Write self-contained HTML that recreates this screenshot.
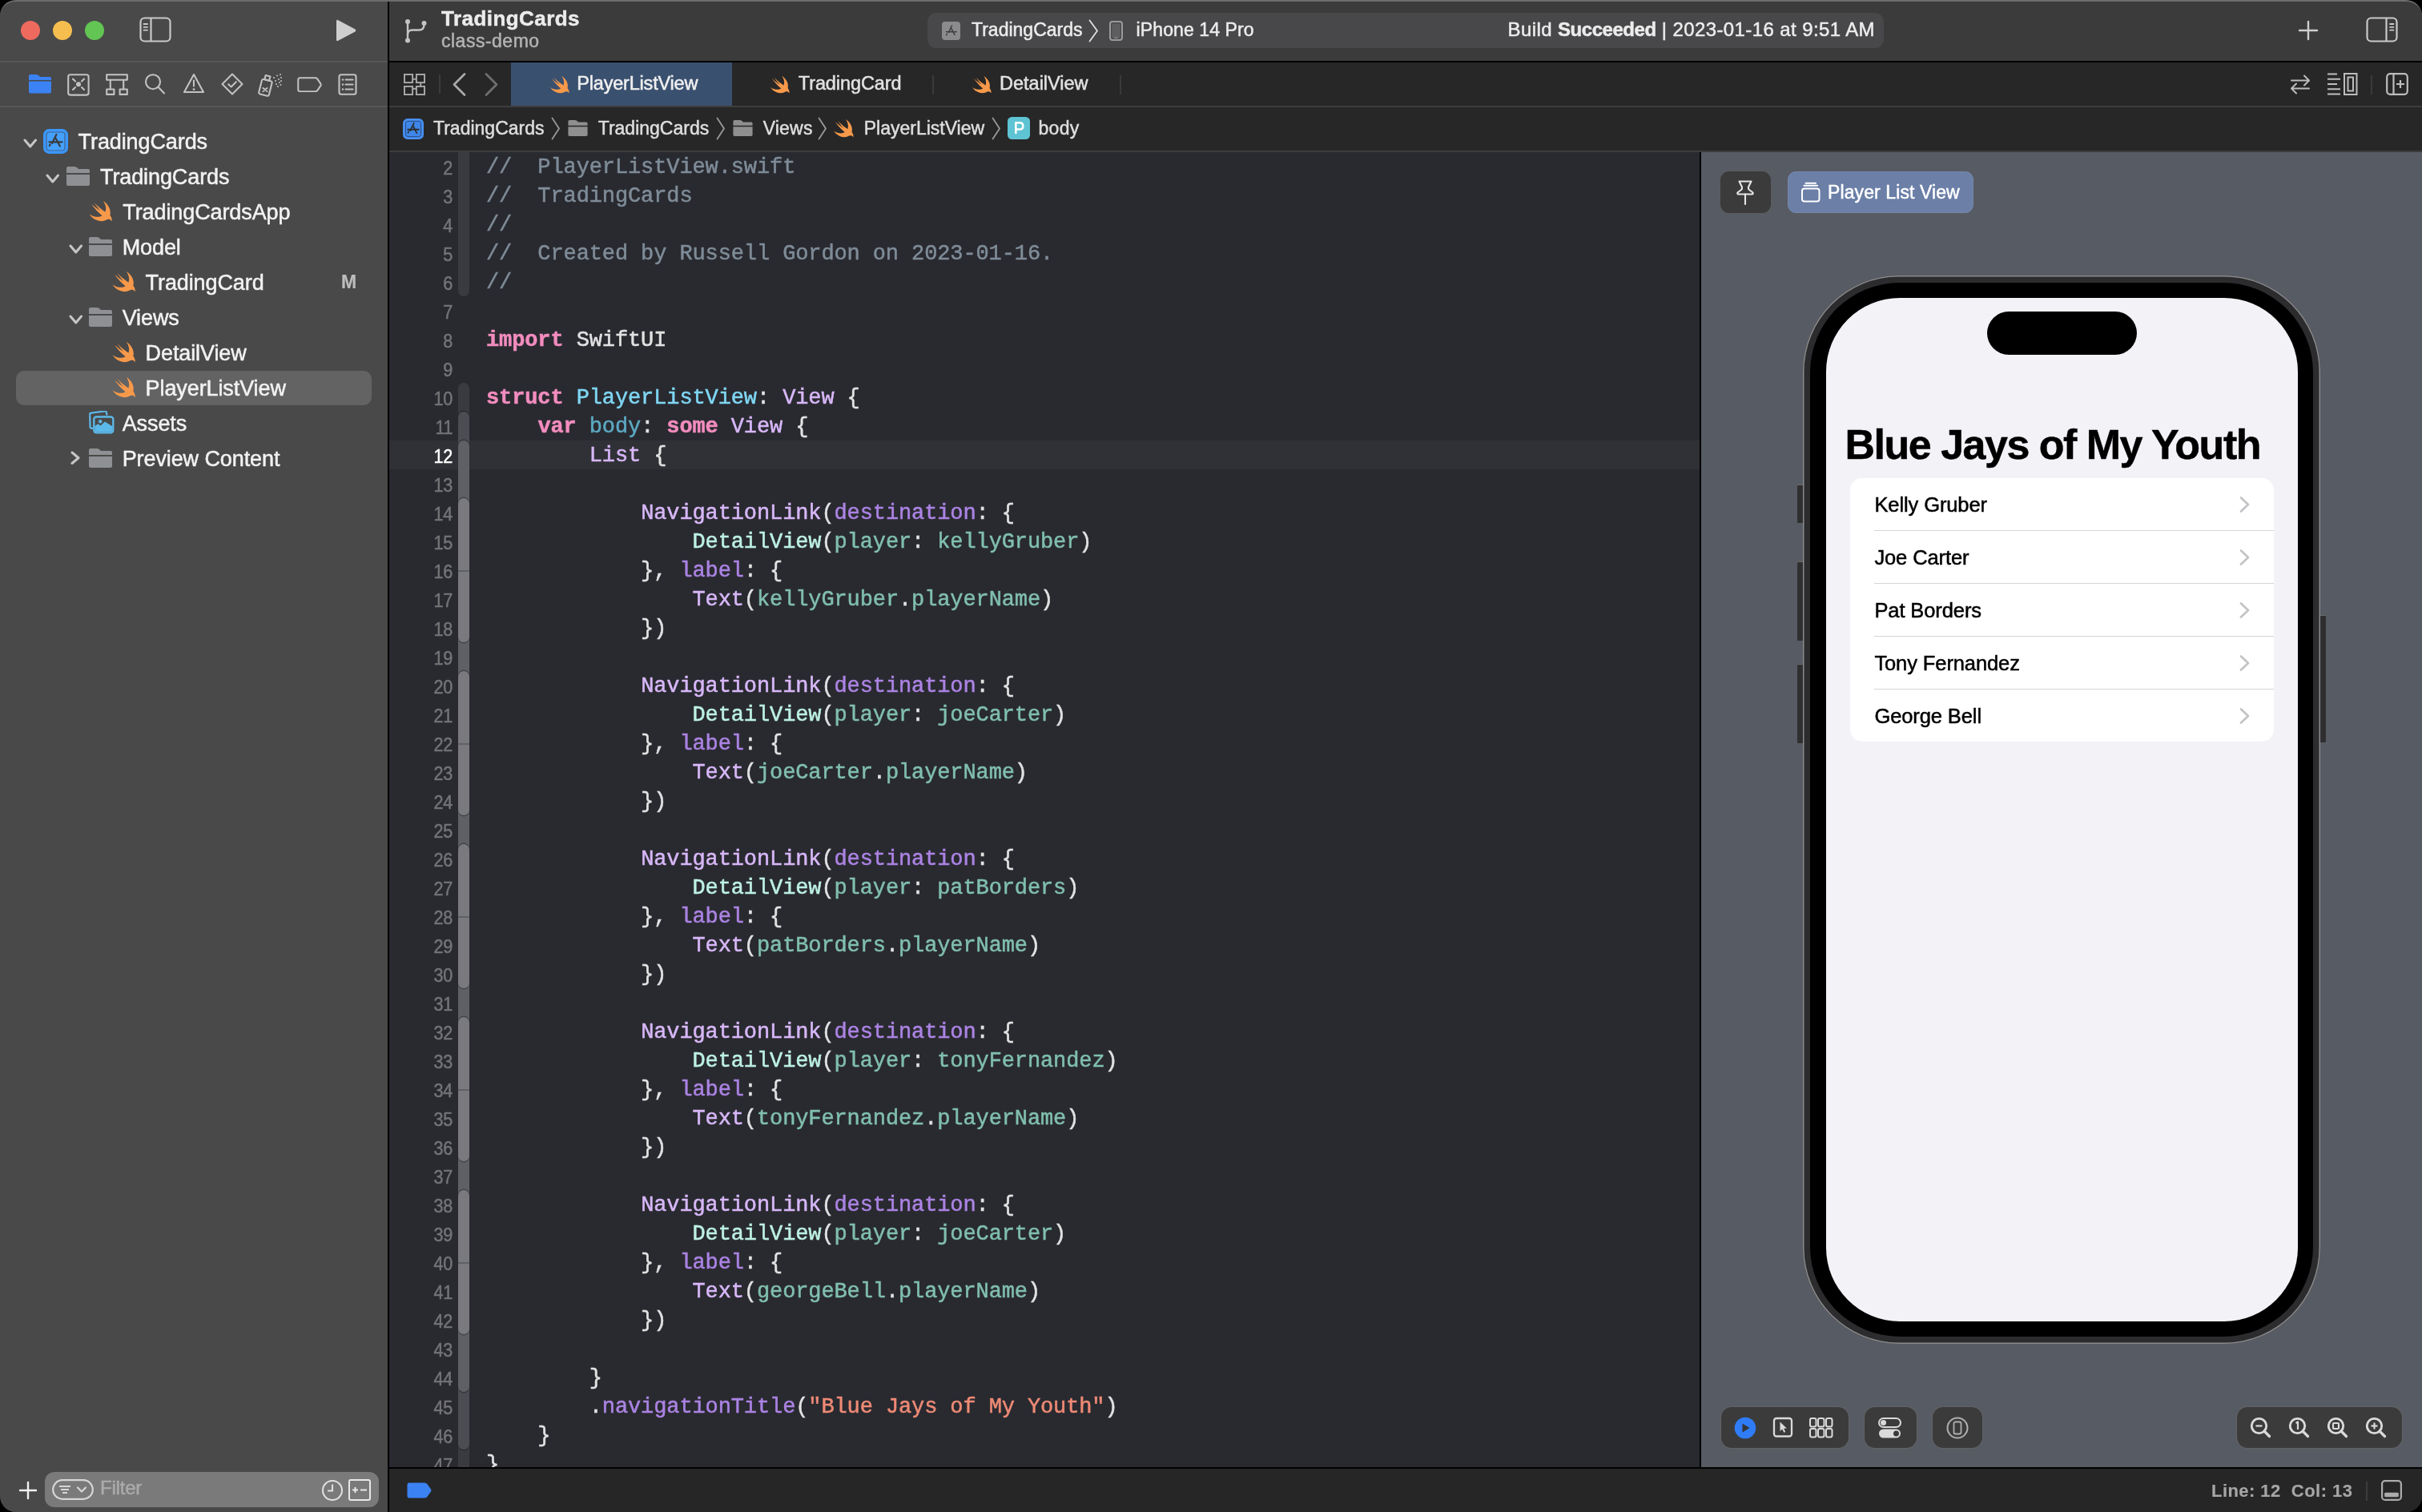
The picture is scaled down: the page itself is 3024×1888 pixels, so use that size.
<!DOCTYPE html>
<html><head><meta charset="utf-8"><style>
*{box-sizing:border-box;margin:0;padding:0}
html,body{width:3024px;height:1888px;overflow:hidden;background:#000}
body{font-family:"Liberation Sans",sans-serif;position:relative}
.a{position:absolute}
svg.a{display:block}
.t{position:absolute;white-space:pre;-webkit-text-stroke-width:0.5px}
#win{position:absolute;left:0;top:0;width:3024px;height:1888px;border-radius:20px;overflow:hidden;background:#292a30;will-change:transform}
#edge{position:absolute;left:0;top:0;width:3024px;height:1888px;border-radius:20px;border-top:2px solid #6c6c6c;pointer-events:none}
.ln{position:absolute;right:1557px;font-size:24px;line-height:24px;letter-spacing:-0.3px;white-space:pre;-webkit-text-stroke-width:0.5px;transform:scaleX(0.9);transform-origin:right center}
.cl{position:absolute;left:121px;font-family:"Liberation Mono",monospace;font-size:27px;line-height:27px;letter-spacing:-0.11px;white-space:pre;color:#e2e2e3;-webkit-text-stroke-width:0.5px}
</style></head><body>
<div id="win">
<div class="a" style="left:0px;top:0px;width:484px;height:1888px;background:#494949;"></div>
<div class="a" style="left:0px;top:76px;width:484px;height:2px;background:#575757;"></div>
<div class="a" style="left:0px;top:132px;width:484px;height:2px;background:#575757;"></div>
<div class="a" style="left:26px;top:26px;width:24px;height:24px;border-radius:50%;background:#ee6a5f"></div>
<div class="a" style="left:66px;top:26px;width:24px;height:24px;border-radius:50%;background:#f5be4f"></div>
<div class="a" style="left:106px;top:26px;width:24px;height:24px;border-radius:50%;background:#62c554"></div>
<svg class="a" style="left:174px;top:21px;" width="40" height="32" viewBox="0 0 40 32"><rect x="1.5" y="1.5" width="37" height="29" rx="5" fill="none" stroke="#c9c9c9" stroke-width="2.2"/><line x1="14.5" y1="2" x2="14.5" y2="30" stroke="#c9c9c9" stroke-width="2.2"/><g stroke="#c9c9c9" stroke-width="1.8" stroke-linecap="round"><line x1="5.5" y1="9" x2="10" y2="9"/><line x1="5.5" y1="12.8" x2="10" y2="12.8"/><line x1="5.5" y1="16.6" x2="10" y2="16.6"/></g></svg>
<svg class="a" style="left:418px;top:23px;" width="28" height="30" viewBox="0 0 28 30"><path d="M2 3.5 Q2 1 4.3 2.2 L25.5 13.4 Q27.3 15 25.5 16.6 L4.3 27.8 Q2 29 2 26.5Z" fill="#cecece"/></svg>
<svg class="a" style="left:36px;top:93px;" width="28" height="24" viewBox="0 0 28 24"><path fill="#3b82f4" d="M2 0 H9 Q11 0 12.5 1.5 L14 3 H26 Q28 3 28 5 V7 H0 V2 Q0 0 2 0Z"/><path fill="#3b82f4" d="M0 8.5 H28 V21.5 Q28 23.5 26 23.5 H2 Q0 23.5 0 21.5Z"/></svg>
<svg class="a" style="left:84px;top:92px;" width="28" height="28" viewBox="0 0 28 28"><rect x="1.2" y="1.2" width="25.4" height="25.4" rx="2.5" fill="none" stroke="#c2c2c2" stroke-width="2.1" stroke-linecap="round" stroke-linejoin="round"/><circle cx="14" cy="13.3" r="3" fill="#c2c2c2"/><g fill="none" stroke="#c2c2c2" stroke-width="2.1" stroke-linecap="round" stroke-linejoin="round" stroke-width="1.8"><line x1="7" y1="6.5" x2="10" y2="9.5"/><line x1="21" y1="6.5" x2="18" y2="9.5"/><line x1="7" y1="20" x2="10" y2="17"/><line x1="21" y1="20" x2="18" y2="17"/></g></svg>
<svg class="a" style="left:132px;top:92px;" width="28" height="28" viewBox="0 0 28 28"><rect x="1.2" y="1.2" width="25.6" height="6.6" fill="none" stroke="#c2c2c2" stroke-width="2.1" stroke-linecap="round" stroke-linejoin="round" stroke-linecap="butt" stroke-linejoin="miter"/><line x1="5.8" y1="8" x2="5.8" y2="19.5" fill="none" stroke="#c2c2c2" stroke-width="2.1" stroke-linecap="round" stroke-linejoin="round"/><line x1="22.2" y1="8" x2="22.2" y2="19.5" fill="none" stroke="#c2c2c2" stroke-width="2.1" stroke-linecap="round" stroke-linejoin="round"/><rect x="1.2" y="19.5" width="9.2" height="6.4" fill="none" stroke="#c2c2c2" stroke-width="2.1" stroke-linecap="round" stroke-linejoin="round" stroke-linejoin="miter"/><rect x="17.6" y="19.5" width="9.2" height="6.4" fill="none" stroke="#c2c2c2" stroke-width="2.1" stroke-linecap="round" stroke-linejoin="round" stroke-linejoin="miter"/></svg>
<svg class="a" style="left:180px;top:91px;" width="28" height="28" viewBox="0 0 28 28"><circle cx="11" cy="11.2" r="9" fill="none" stroke="#c2c2c2" stroke-width="2.1" stroke-linecap="round" stroke-linejoin="round"/><line x1="17.6" y1="17.8" x2="25" y2="25.4" fill="none" stroke="#c2c2c2" stroke-width="2.1" stroke-linecap="round" stroke-linejoin="round" stroke-width="2.4"/></svg>
<svg class="a" style="left:228px;top:91px;" width="28" height="28" viewBox="0 0 28 28"><path d="M14 2 L26 24 H2 Z" fill="none" stroke="#c2c2c2" stroke-width="2.1" stroke-linecap="round" stroke-linejoin="round"/><path d="M14 9.5 L14 16.5" fill="none" stroke="#c2c2c2" stroke-width="2.1" stroke-linecap="round" stroke-linejoin="round" stroke-width="2.8"/><circle cx="14" cy="20.6" r="1.4" fill="#c2c2c2"/></svg>
<svg class="a" style="left:276px;top:91px;" width="28" height="28" viewBox="0 0 28 28"><path d="M14 1.5 L26.5 14 L14 26.5 L1.5 14 Z" fill="none" stroke="#c2c2c2" stroke-width="2.1" stroke-linecap="round" stroke-linejoin="round"/><path d="M9.2 14.2 L12.7 17.4 L18.8 11.2" fill="none" stroke="#c2c2c2" stroke-width="2.1" stroke-linecap="round" stroke-linejoin="round" stroke-width="2.3"/></svg>
<svg class="a" style="left:322px;top:91px;" width="34" height="30" viewBox="0 0 34 30"><g transform="rotate(14 10 18)"><rect x="3" y="9" width="13" height="19" rx="2" fill="none" stroke="#c2c2c2" stroke-width="2.1" stroke-linecap="round" stroke-linejoin="round"/><rect x="6" y="3.5" width="6" height="5.5" fill="none" stroke="#c2c2c2" stroke-width="2.1" stroke-linecap="round" stroke-linejoin="round"/></g><path d="M6.5 19 L11.5 23 M11.5 19 L6.5 23" fill="none" stroke="#c2c2c2" stroke-width="2.1" stroke-linecap="round" stroke-linejoin="round" stroke-width="1.6"/><g fill="#c2c2c2"><circle cx="20" cy="6" r="1"/><circle cx="24" cy="3.5" r="1"/><circle cx="28" cy="2" r="1"/><circle cx="22" cy="10" r="1"/><circle cx="26" cy="8" r="1"/><circle cx="29" cy="6" r="1"/><circle cx="23" cy="14" r="1"/><circle cx="27" cy="12" r="1"/><circle cx="29" cy="10" r="1"/><circle cx="25" cy="17" r="1"/><circle cx="28.5" cy="15" r="1"/></g></svg>
<svg class="a" style="left:370.5px;top:95.5px;" width="31" height="19.5" viewBox="0 0 32 20"><path d="M3.5 1.3 H23.5 Q25 1.3 26 2.4 L30.2 8.6 Q31 10 30.2 11.4 L26 17.6 Q25 18.7 23.5 18.7 H3.5 Q1.3 18.7 1.3 16.5 V3.5 Q1.3 1.3 3.5 1.3Z" fill="none" stroke="#c2c2c2" stroke-width="2.1" stroke-linecap="round" stroke-linejoin="round"/></svg>
<svg class="a" style="left:422px;top:92px;" width="24" height="28" viewBox="0 0 24 28"><rect x="1.5" y="1.2" width="21" height="24.6" rx="2.5" fill="none" stroke="#c2c2c2" stroke-width="2.1" stroke-linecap="round" stroke-linejoin="round"/><g fill="#c2c2c2"><circle cx="6" cy="7.5" r="1.2"/><circle cx="6" cy="13.5" r="1.2"/><circle cx="6" cy="19.5" r="1.2"/></g><g fill="none" stroke="#c2c2c2" stroke-width="2.1" stroke-linecap="round" stroke-linejoin="round" stroke-width="1.8"><line x1="9.5" y1="7.5" x2="18.5" y2="7.5"/><line x1="9.5" y1="13.5" x2="18.5" y2="13.5"/><line x1="9.5" y1="19.5" x2="18.5" y2="19.5"/></g></svg>
<div class="a" style="left:20px;top:463px;width:444px;height:43px;background:#636363;border-radius:10px;"></div>
<svg class="a" style="left:29px;top:173px;" width="17.5" height="12" viewBox="-2 -2 17.5 12"><path d="M0 0 L6.75 8 L13.5 0" fill="none" stroke="#c6c6c6" stroke-width="3" stroke-linecap="round" stroke-linejoin="round"/></svg>
<svg class="a" style="left:54px;top:161px;" width="31" height="31" viewBox="0 0 31 31"><rect x="1.3" y="1.3" width="28.4" height="28.4" rx="6" fill="#45a0ff" stroke="#3a96fb" stroke-width="2.6"/><rect x="4" y="4" width="23" height="23" rx="3.5" fill="none" stroke="#3c5f8a" stroke-width="1.2"/><g stroke="#3b3b3b" stroke-width="2.2" stroke-linecap="round"><line x1="16.4" y1="7" x2="11" y2="18"/><line x1="15.5" y1="11.5" x2="20.8" y2="21.5"/><line x1="7.5" y1="16.3" x2="23.5" y2="16.3"/><line x1="8.5" y1="19.5" x2="7.8" y2="21"/></g></svg>
<div class="t" style="left:97.60px;top:163.94px;font-size:27px;line-height:27px;color:#f2f2f2;letter-spacing:-0.1px;">TradingCards</div>
<svg class="a" style="left:57px;top:217px;" width="17.5" height="12" viewBox="-2 -2 17.5 12"><path d="M0 0 L6.75 8 L13.5 0" fill="none" stroke="#c6c6c6" stroke-width="3" stroke-linecap="round" stroke-linejoin="round"/></svg>
<svg class="a" style="left:83px;top:208px;" width="29" height="24" viewBox="0 0 29 24"><path fill="#8e9093" d="M2 0 H10 Q12 0 13.5 1.5 L15 3 H27 Q29 3 29 5 V8 H0 V2 Q0 0 2 0Z"/><path fill="#8e9093" d="M0 10 H29 V22 Q29 24 27 24 H2 Q0 24 0 22Z"/></svg>
<div class="t" style="left:125.00px;top:207.94px;font-size:27px;line-height:27px;color:#f2f2f2;letter-spacing:-0.1px;">TradingCards</div>
<svg class="a" style="left:111px;top:251px;overflow:visible" width="29" height="26" viewBox="2.2 3.4 18.4 16.7"><path fill="#f7994a" d="M13.543 3.41c4.114 2.47 6.545 7.162 5.549 11.131-.024.093-.05.181-.076.272l.002.001c2.062 2.538 1.5 5.258 1.236 4.745-1.072-2.086-3.066-1.568-4.088-1.043a6.803 6.803 0 0 1-.281.158l-.02.012-.002.002c-2.115 1.123-4.957 1.205-7.812-.022a12.568 12.568 0 0 1-5.64-4.838c.649.48 1.35.902 2.097 1.252 3.019 1.414 6.051 1.311 8.197-.002C9.651 12.73 7.101 9.67 5.146 7.191a10.628 10.628 0 0 1-1.005-1.384c2.34 2.142 6.038 4.83 7.365 5.576C8.69 8.408 6.208 4.743 6.324 4.86c4.436 4.47 8.528 6.996 8.528 6.996.154.085.27.154.36.213.085-.215.16-.437.224-.668.707-2.588-.09-5.548-1.893-7.992z"/></svg>
<div class="t" style="left:153.30px;top:251.94px;font-size:27px;line-height:27px;color:#f2f2f2;letter-spacing:-0.1px;">TradingCardsApp</div>
<svg class="a" style="left:86px;top:305px;" width="17.5" height="12" viewBox="-2 -2 17.5 12"><path d="M0 0 L6.75 8 L13.5 0" fill="none" stroke="#c6c6c6" stroke-width="3" stroke-linecap="round" stroke-linejoin="round"/></svg>
<svg class="a" style="left:111px;top:296px;" width="29" height="24" viewBox="0 0 29 24"><path fill="#8e9093" d="M2 0 H10 Q12 0 13.5 1.5 L15 3 H27 Q29 3 29 5 V8 H0 V2 Q0 0 2 0Z"/><path fill="#8e9093" d="M0 10 H29 V22 Q29 24 27 24 H2 Q0 24 0 22Z"/></svg>
<div class="t" style="left:152.70px;top:295.94px;font-size:27px;line-height:27px;color:#f2f2f2;letter-spacing:-0.1px;">Model</div>
<svg class="a" style="left:139.5px;top:339px;overflow:visible" width="29" height="26" viewBox="2.2 3.4 18.4 16.7"><path fill="#f7994a" d="M13.543 3.41c4.114 2.47 6.545 7.162 5.549 11.131-.024.093-.05.181-.076.272l.002.001c2.062 2.538 1.5 5.258 1.236 4.745-1.072-2.086-3.066-1.568-4.088-1.043a6.803 6.803 0 0 1-.281.158l-.02.012-.002.002c-2.115 1.123-4.957 1.205-7.812-.022a12.568 12.568 0 0 1-5.64-4.838c.649.48 1.35.902 2.097 1.252 3.019 1.414 6.051 1.311 8.197-.002C9.651 12.73 7.101 9.67 5.146 7.191a10.628 10.628 0 0 1-1.005-1.384c2.34 2.142 6.038 4.83 7.365 5.576C8.69 8.408 6.208 4.743 6.324 4.86c4.436 4.47 8.528 6.996 8.528 6.996.154.085.27.154.36.213.085-.215.16-.437.224-.668.707-2.588-.09-5.548-1.893-7.992z"/></svg>
<div class="t" style="left:181.60px;top:339.94px;font-size:27px;line-height:27px;color:#f2f2f2;letter-spacing:-0.1px;">TradingCard</div>
<div class="t" style="left:426.00px;top:341.03px;font-size:23px;line-height:23px;color:#bdbdbd;font-weight:700;-webkit-text-stroke-width:0.2px;">M</div>
<svg class="a" style="left:86px;top:393px;" width="17.5" height="12" viewBox="-2 -2 17.5 12"><path d="M0 0 L6.75 8 L13.5 0" fill="none" stroke="#c6c6c6" stroke-width="3" stroke-linecap="round" stroke-linejoin="round"/></svg>
<svg class="a" style="left:111px;top:384px;" width="29" height="24" viewBox="0 0 29 24"><path fill="#8e9093" d="M2 0 H10 Q12 0 13.5 1.5 L15 3 H27 Q29 3 29 5 V8 H0 V2 Q0 0 2 0Z"/><path fill="#8e9093" d="M0 10 H29 V22 Q29 24 27 24 H2 Q0 24 0 22Z"/></svg>
<div class="t" style="left:152.70px;top:383.94px;font-size:27px;line-height:27px;color:#f2f2f2;letter-spacing:-0.1px;">Views</div>
<svg class="a" style="left:139.5px;top:427px;overflow:visible" width="29" height="26" viewBox="2.2 3.4 18.4 16.7"><path fill="#f7994a" d="M13.543 3.41c4.114 2.47 6.545 7.162 5.549 11.131-.024.093-.05.181-.076.272l.002.001c2.062 2.538 1.5 5.258 1.236 4.745-1.072-2.086-3.066-1.568-4.088-1.043a6.803 6.803 0 0 1-.281.158l-.02.012-.002.002c-2.115 1.123-4.957 1.205-7.812-.022a12.568 12.568 0 0 1-5.64-4.838c.649.48 1.35.902 2.097 1.252 3.019 1.414 6.051 1.311 8.197-.002C9.651 12.73 7.101 9.67 5.146 7.191a10.628 10.628 0 0 1-1.005-1.384c2.34 2.142 6.038 4.83 7.365 5.576C8.69 8.408 6.208 4.743 6.324 4.86c4.436 4.47 8.528 6.996 8.528 6.996.154.085.27.154.36.213.085-.215.16-.437.224-.668.707-2.588-.09-5.548-1.893-7.992z"/></svg>
<div class="t" style="left:181.60px;top:427.94px;font-size:27px;line-height:27px;color:#f2f2f2;letter-spacing:-0.1px;">DetailView</div>
<svg class="a" style="left:139.5px;top:471px;overflow:visible" width="29" height="26" viewBox="2.2 3.4 18.4 16.7"><path fill="#f7994a" d="M13.543 3.41c4.114 2.47 6.545 7.162 5.549 11.131-.024.093-.05.181-.076.272l.002.001c2.062 2.538 1.5 5.258 1.236 4.745-1.072-2.086-3.066-1.568-4.088-1.043a6.803 6.803 0 0 1-.281.158l-.02.012-.002.002c-2.115 1.123-4.957 1.205-7.812-.022a12.568 12.568 0 0 1-5.64-4.838c.649.48 1.35.902 2.097 1.252 3.019 1.414 6.051 1.311 8.197-.002C9.651 12.73 7.101 9.67 5.146 7.191a10.628 10.628 0 0 1-1.005-1.384c2.34 2.142 6.038 4.83 7.365 5.576C8.69 8.408 6.208 4.743 6.324 4.86c4.436 4.47 8.528 6.996 8.528 6.996.154.085.27.154.36.213.085-.215.16-.437.224-.668.707-2.588-.09-5.548-1.893-7.992z"/></svg>
<div class="t" style="left:181.60px;top:471.94px;font-size:27px;line-height:27px;color:#f2f2f2;letter-spacing:-0.1px;">PlayerListView</div>
<svg class="a" style="left:109px;top:513px;" width="34" height="29" viewBox="0 0 34 29"><path d="M3.2 5.2 Q2.8 3 5 2.6 L21.5 0.4 Q23.6 0.2 24 2.3 L24.5 5.5" fill="none" stroke="#5cb8e8" stroke-width="2.2"/><path d="M7.5 21.5 L5.8 21.8 Q3.8 22 3.5 19.8 L3.2 5.2" fill="none" stroke="#5cb8e8" stroke-width="2.2"/><rect x="8.3" y="7.5" width="24" height="19.8" rx="3" fill="none" stroke="#5cb8e8" stroke-width="2.3"/><circle cx="16.2" cy="13.3" r="2.2" fill="#5cb8e8"/><path d="M9.4 19 L13.5 16.3 L16.5 18.5 L22 13.6 L31.2 19.3 V24.5 Q31.2 26.2 29.3 26.2 H11.3 Q9.4 26.2 9.4 24.5 Z" fill="#5cb8e8"/></svg>
<div class="t" style="left:152.70px;top:515.94px;font-size:27px;line-height:27px;color:#f2f2f2;letter-spacing:-0.1px;">Assets</div>
<svg class="a" style="left:88.3px;top:563px;" width="12" height="17.5" viewBox="-2 -2 12 17.5"><path d="M0 0 L8 6.75 L0 13.5" fill="none" stroke="#c6c6c6" stroke-width="3" stroke-linecap="round" stroke-linejoin="round"/></svg>
<svg class="a" style="left:111px;top:560px;" width="29" height="24" viewBox="0 0 29 24"><path fill="#8e9093" d="M2 0 H10 Q12 0 13.5 1.5 L15 3 H27 Q29 3 29 5 V8 H0 V2 Q0 0 2 0Z"/><path fill="#8e9093" d="M0 10 H29 V22 Q29 24 27 24 H2 Q0 24 0 22Z"/></svg>
<div class="t" style="left:152.70px;top:559.94px;font-size:27px;line-height:27px;color:#f2f2f2;letter-spacing:-0.1px;">Preview Content</div>
<svg class="a" style="left:23px;top:1849px;" width="24" height="24" viewBox="0 0 24 24"><g stroke="#f2f2f2" stroke-width="2.4" stroke-linecap="round"><line x1="12" y1="2" x2="12" y2="22"/><line x1="2" y1="12" x2="22" y2="12"/></g></svg>
<div class="a" style="left:56px;top:1838px;width:417px;height:44px;background:#7a7a7a;border-radius:12px;"></div>
<svg class="a" style="left:65px;top:1847px;" width="52" height="26" viewBox="0 0 52 26"><rect x="1.2" y="1.2" width="49.6" height="23.6" rx="11.8" fill="none" stroke="#d6d6d6" stroke-width="2.2"/><g stroke="#d6d6d6" stroke-width="2.2"><line x1="9" y1="9" x2="23" y2="9"/><line x1="11" y1="13" x2="21" y2="13"/><line x1="13" y1="17" x2="19" y2="17"/></g><path d="M32 10.5 L37 15.5 L42 10.5" fill="none" stroke="#d6d6d6" stroke-width="2.2" stroke-linecap="round" stroke-linejoin="round"/></svg>
<div class="t" style="left:125.00px;top:1846.38px;font-size:24px;line-height:24px;color:#ababab;letter-spacing:-0.2px;">Filter</div>
<svg class="a" style="left:401px;top:1847px;" width="28" height="28" viewBox="0 0 28 28"><circle cx="14" cy="14" r="12" fill="none" stroke="#e0e0e0" stroke-width="2"/><path d="M14 6.5 V14.5 H8" fill="none" stroke="#e0e0e0" stroke-width="2"/></svg>
<svg class="a" style="left:435px;top:1847px;" width="28" height="27" viewBox="0 0 28 27"><rect x="1" y="1" width="26" height="25" rx="2" fill="none" stroke="#e8e8e8" stroke-width="2"/><g stroke="#e8e8e8" stroke-width="2"><line x1="5" y1="13.5" x2="12" y2="13.5"/><line x1="8.5" y1="10" x2="8.5" y2="17"/><line x1="15" y1="13.5" x2="23" y2="13.5"/></g></svg>
<div class="a" style="left:484px;top:0px;width:2px;height:1888px;background:#000;"></div>
<div class="a" style="left:486px;top:0px;width:2538px;height:76px;background:#3b3b3b;"></div>
<div class="a" style="left:486px;top:76px;width:2538px;height:2px;background:#000;"></div>
<svg class="a" style="left:504px;top:22px;" width="32" height="34" viewBox="0 0 32 34"><circle cx="5" cy="5" r="3" fill="#c4c4c4"/><circle cx="5" cy="28.5" r="3" fill="#c4c4c4"/><circle cx="25.5" cy="7" r="3" fill="#c4c4c4"/><line x1="5" y1="5" x2="5" y2="28.5" fill="none" stroke="#c4c4c4" stroke-width="2.4" stroke-linecap="round"/><path d="M5 21 Q5 15.5 11 15.5 H19 Q25.5 15.5 25.5 9" fill="none" stroke="#c4c4c4" stroke-width="2.4" stroke-linecap="round"/></svg>
<div class="t" style="left:551.00px;top:9.99px;font-size:26px;line-height:26px;color:#ececec;font-weight:700;letter-spacing:0.45px;">TradingCards</div>
<div class="t" style="left:551.00px;top:40.03px;font-size:23px;line-height:23px;color:#b3b3b3;letter-spacing:0.5px;">class-demo</div>
<div class="a" style="left:1158px;top:16px;width:1194px;height:44px;background:#48484a;border-radius:11px;"></div>
<svg class="a" style="left:1176px;top:27px;" width="23" height="23" viewBox="0 0 23 23"><rect x="0" y="0" width="23" height="23" rx="4" fill="#8b8b8d"/><g stroke="#3e3e40" stroke-width="1.6" stroke-linecap="round"><line x1="12.5" y1="5" x2="8.5" y2="13.5"/><line x1="11.8" y1="8.5" x2="16" y2="16.5"/><line x1="5.5" y1="12.8" x2="18" y2="12.8"/><line x1="6.3" y1="15.5" x2="5.8" y2="16.6"/></g></svg>
<div class="t" style="left:1213.00px;top:26.33px;font-size:23px;line-height:23px;color:#ececec;">TradingCards</div>
<svg class="a" style="left:1359px;top:24px;" width="13" height="29" viewBox="0 0 13 29"><path d="M1.5 1.5 L11 14.5 L1.5 27.5" fill="none" stroke="#e0e0e0" stroke-width="1.8" stroke-linecap="round" stroke-linejoin="round"/></svg>
<svg class="a" style="left:1385px;top:26px;" width="17" height="25" viewBox="0 0 17 25"><rect x="1" y="1" width="15" height="23" rx="3" fill="none" stroke="#9a9a9a" stroke-width="2"/><rect x="3.3" y="3.5" width="10.4" height="18" rx="1" fill="#5e5e60"/><line x1="6" y1="21.3" x2="11" y2="21.3" stroke="#9a9a9a" stroke-width="1"/></svg>
<div class="t" style="left:1418.60px;top:26.33px;font-size:23px;line-height:23px;color:#ececec;letter-spacing:0.1px;">iPhone 14 Pro</div>
<div class="t" style="right:683.00px;top:25.48px;font-size:24px;line-height:24px;color:#ececec;letter-spacing:0.4px;">Build <b style="letter-spacing:-0.45px">Succeeded</b> | 2023-01-16 at 9:51 AM</div>
<svg class="a" style="left:2869px;top:25px;" width="26" height="26" viewBox="0 0 26 26"><g stroke="#cfcfcf" stroke-width="2.4" stroke-linecap="round"><line x1="13" y1="2" x2="13" y2="24"/><line x1="2" y1="13" x2="24" y2="13"/></g></svg>
<svg class="a" style="left:2954px;top:21px;" width="40" height="32" viewBox="0 0 40 32"><rect x="1.5" y="1.5" width="37" height="29" rx="5" fill="none" stroke="#c9c9c9" stroke-width="2.2"/><line x1="25.5" y1="2" x2="25.5" y2="30" stroke="#c9c9c9" stroke-width="2.2"/><g stroke="#c9c9c9" stroke-width="1.8" stroke-linecap="round"><line x1="30" y1="9" x2="34.5" y2="9"/><line x1="30" y1="12.8" x2="34.5" y2="12.8"/><line x1="30" y1="16.6" x2="34.5" y2="16.6"/></g></svg>
<div class="a" style="left:486px;top:78px;width:2538px;height:54px;background:#272727;"></div>
<div class="a" style="left:486px;top:132px;width:2538px;height:2px;background:#3d3d3d;"></div>
<svg class="a" style="left:503.5px;top:91.5px;" width="27" height="27" viewBox="0 0 28 28"><rect x="1" y="1" width="10.5" height="10.5" fill="none" stroke="#a9a9a9" stroke-width="2"/><rect x="16.5" y="1" width="10.5" height="10.5" fill="none" stroke="#a9a9a9" stroke-width="2"/><rect x="1" y="16.5" width="10.5" height="10.5" fill="none" stroke="#a9a9a9" stroke-width="2"/><rect x="16.5" y="16.5" width="10.5" height="10.5" fill="none" stroke="#a9a9a9" stroke-width="2"/><line x1="11.5" y1="7" x2="16.5" y2="7" stroke="#a9a9a9" stroke-width="2"/><line x1="22" y1="11.5" x2="22" y2="16.5" stroke="#a9a9a9" stroke-width="2"/><line x1="11.5" y1="19.5" x2="16.5" y2="19.5" stroke="#a9a9a9" stroke-width="2"/></svg>
<div class="a" style="left:548px;top:93px;width:2px;height:24px;background:#3c3c3c;"></div>
<svg class="a" style="left:563px;top:90px;" width="21" height="31" viewBox="0 0 21 31"><path d="M17 2.5 L4 15.5 L17 28.5" fill="none" stroke="#a9a9a9" stroke-width="2.8" stroke-linecap="round" stroke-linejoin="round"/></svg>
<svg class="a" style="left:603px;top:90px;" width="21" height="31" viewBox="0 0 21 31"><path d="M4 2.5 L17 15.5 L4 28.5" fill="none" stroke="#6f6f6f" stroke-width="2.8" stroke-linecap="round" stroke-linejoin="round"/></svg>
<div class="a" style="left:638px;top:78px;width:276px;height:54px;background:#3a506f;"></div>
<svg class="a" style="left:685.5px;top:95px;overflow:visible" width="25" height="22" viewBox="2.2 3.4 18.4 16.7"><path fill="#f7994a" d="M13.543 3.41c4.114 2.47 6.545 7.162 5.549 11.131-.024.093-.05.181-.076.272l.002.001c2.062 2.538 1.5 5.258 1.236 4.745-1.072-2.086-3.066-1.568-4.088-1.043a6.803 6.803 0 0 1-.281.158l-.02.012-.002.002c-2.115 1.123-4.957 1.205-7.812-.022a12.568 12.568 0 0 1-5.64-4.838c.649.48 1.35.902 2.097 1.252 3.019 1.414 6.051 1.311 8.197-.002C9.651 12.73 7.101 9.67 5.146 7.191a10.628 10.628 0 0 1-1.005-1.384c2.34 2.142 6.038 4.83 7.365 5.576C8.69 8.408 6.208 4.743 6.324 4.86c4.436 4.47 8.528 6.996 8.528 6.996.154.085.27.154.36.213.085-.215.16-.437.224-.668.707-2.588-.09-5.548-1.893-7.992z"/></svg>
<div class="t" style="left:720.30px;top:93.30px;font-size:23.5px;line-height:23.5px;color:#f0f0f0;letter-spacing:-0.2px;">PlayerListView</div>
<svg class="a" style="left:961px;top:95px;overflow:visible" width="25" height="22" viewBox="2.2 3.4 18.4 16.7"><path fill="#f7994a" d="M13.543 3.41c4.114 2.47 6.545 7.162 5.549 11.131-.024.093-.05.181-.076.272l.002.001c2.062 2.538 1.5 5.258 1.236 4.745-1.072-2.086-3.066-1.568-4.088-1.043a6.803 6.803 0 0 1-.281.158l-.02.012-.002.002c-2.115 1.123-4.957 1.205-7.812-.022a12.568 12.568 0 0 1-5.64-4.838c.649.48 1.35.902 2.097 1.252 3.019 1.414 6.051 1.311 8.197-.002C9.651 12.73 7.101 9.67 5.146 7.191a10.628 10.628 0 0 1-1.005-1.384c2.34 2.142 6.038 4.83 7.365 5.576C8.69 8.408 6.208 4.743 6.324 4.86c4.436 4.47 8.528 6.996 8.528 6.996.154.085.27.154.36.213.085-.215.16-.437.224-.668.707-2.588-.09-5.548-1.893-7.992z"/></svg>
<div class="t" style="left:996.80px;top:93.30px;font-size:23.5px;line-height:23.5px;color:#e2e2e2;letter-spacing:-0.1px;">TradingCard</div>
<div class="a" style="left:1164px;top:94px;width:2px;height:24px;background:#3a3a3a;"></div>
<svg class="a" style="left:1213px;top:95px;overflow:visible" width="25" height="22" viewBox="2.2 3.4 18.4 16.7"><path fill="#f7994a" d="M13.543 3.41c4.114 2.47 6.545 7.162 5.549 11.131-.024.093-.05.181-.076.272l.002.001c2.062 2.538 1.5 5.258 1.236 4.745-1.072-2.086-3.066-1.568-4.088-1.043a6.803 6.803 0 0 1-.281.158l-.02.012-.002.002c-2.115 1.123-4.957 1.205-7.812-.022a12.568 12.568 0 0 1-5.64-4.838c.649.48 1.35.902 2.097 1.252 3.019 1.414 6.051 1.311 8.197-.002C9.651 12.73 7.101 9.67 5.146 7.191a10.628 10.628 0 0 1-1.005-1.384c2.34 2.142 6.038 4.83 7.365 5.576C8.69 8.408 6.208 4.743 6.324 4.86c4.436 4.47 8.528 6.996 8.528 6.996.154.085.27.154.36.213.085-.215.16-.437.224-.668.707-2.588-.09-5.548-1.893-7.992z"/></svg>
<div class="t" style="left:1248.00px;top:93.30px;font-size:23.5px;line-height:23.5px;color:#e2e2e2;">DetailView</div>
<div class="a" style="left:1398px;top:94px;width:2px;height:24px;background:#3a3a3a;"></div>
<svg class="a" style="left:2858px;top:91px;" width="28" height="29" viewBox="0 0 28 29"><g fill="none" stroke="#bdbdbd" stroke-width="2" stroke-linecap="round" stroke-linejoin="round"><path d="M3 9.5 H24.5 M19 3.5 L25 9.5 L19 15.5"/><path d="M25 19.5 H3.5 M9 13.5 L3 19.5 L9 25.5"/></g></svg>
<svg class="a" style="left:2905px;top:91px;" width="40" height="28" viewBox="0 0 40 28"><g stroke="#bdbdbd" stroke-width="2"><line x1="1" y1="1.5" x2="13" y2="1.5"/><line x1="1" y1="7.8" x2="17" y2="7.8"/><line x1="1" y1="14" x2="13" y2="14"/><line x1="1" y1="20.2" x2="17" y2="20.2"/><line x1="1" y1="26.5" x2="17" y2="26.5"/></g><rect x="22" y="1" width="15.5" height="26" fill="none" stroke="#bdbdbd" stroke-width="2"/><rect x="26.5" y="5.5" width="6.5" height="17" fill="none" stroke="#bdbdbd" stroke-width="2"/></svg>
<div class="a" style="left:2960px;top:94px;width:2px;height:24px;background:#3a3a3a;"></div>
<svg class="a" style="left:2979px;top:91px;" width="28" height="28" viewBox="0 0 28 28"><rect x="1.2" y="1.2" width="25.6" height="25.6" rx="4" fill="none" stroke="#bdbdbd" stroke-width="2.2"/><line x1="9.5" y1="1.5" x2="9.5" y2="26.5" stroke="#bdbdbd" stroke-width="2.2"/><g stroke="#bdbdbd" stroke-width="2.2"><line x1="18" y1="9" x2="18" y2="19"/><line x1="13" y1="14" x2="23" y2="14"/></g></svg>
<div class="a" style="left:486px;top:134px;width:2538px;height:54px;background:#272727;"></div>
<div class="a" style="left:486px;top:188px;width:2538px;height:2px;background:#3d3d3d;"></div>
<svg class="a" style="left:502.5px;top:147.5px;" width="26" height="26" viewBox="0 0 27 27"><rect x="1.1" y="1.1" width="24.8" height="24.8" rx="5" fill="#3f86e9" stroke="#4a8ff0" stroke-width="2.2"/><rect x="3.6" y="3.6" width="19.8" height="19.8" rx="3" fill="none" stroke="#2b4f80" stroke-width="1"/><g stroke="#2e2e2e" stroke-width="1.9" stroke-linecap="round"><line x1="14.3" y1="6" x2="9.6" y2="15.7"/><line x1="13.5" y1="10" x2="18" y2="18.8"/><line x1="6.5" y1="14.3" x2="20.5" y2="14.3"/><line x1="7.4" y1="17" x2="6.8" y2="18.3"/></g></svg>
<div class="t" style="left:541.00px;top:149.03px;font-size:23px;line-height:23px;color:#dedede;">TradingCards</div>
<svg class="a" style="left:688px;top:146px;" width="12" height="29" viewBox="0 0 12 29"><path d="M1.5 1.5 L10 14.5 L1.5 27.5" fill="none" stroke="#9a9a9a" stroke-width="1.8" stroke-linecap="round" stroke-linejoin="round"/></svg>
<svg class="a" style="left:709px;top:150px;" width="25" height="20" viewBox="0 0 29 24"><path fill="#8f8f8f" d="M2 0 H10 Q12 0 13.5 1.5 L15 3 H27 Q29 3 29 5 V8 H0 V2 Q0 0 2 0Z"/><path fill="#8f8f8f" d="M0 10 H29 V22 Q29 24 27 24 H2 Q0 24 0 22Z"/></svg>
<div class="t" style="left:746.70px;top:149.03px;font-size:23px;line-height:23px;color:#dedede;">TradingCards</div>
<svg class="a" style="left:894px;top:146px;" width="12" height="29" viewBox="0 0 12 29"><path d="M1.5 1.5 L10 14.5 L1.5 27.5" fill="none" stroke="#9a9a9a" stroke-width="1.8" stroke-linecap="round" stroke-linejoin="round"/></svg>
<svg class="a" style="left:915px;top:150px;" width="25" height="20" viewBox="0 0 29 24"><path fill="#8f8f8f" d="M2 0 H10 Q12 0 13.5 1.5 L15 3 H27 Q29 3 29 5 V8 H0 V2 Q0 0 2 0Z"/><path fill="#8f8f8f" d="M0 10 H29 V22 Q29 24 27 24 H2 Q0 24 0 22Z"/></svg>
<div class="t" style="left:952.70px;top:149.03px;font-size:23px;line-height:23px;color:#dedede;letter-spacing:0.2px;">Views</div>
<svg class="a" style="left:1021px;top:146px;" width="12" height="29" viewBox="0 0 12 29"><path d="M1.5 1.5 L10 14.5 L1.5 27.5" fill="none" stroke="#9a9a9a" stroke-width="1.8" stroke-linecap="round" stroke-linejoin="round"/></svg>
<svg class="a" style="left:1040px;top:149px;overflow:visible" width="26" height="23" viewBox="2.2 3.4 18.4 16.7"><path fill="#f7994a" d="M13.543 3.41c4.114 2.47 6.545 7.162 5.549 11.131-.024.093-.05.181-.076.272l.002.001c2.062 2.538 1.5 5.258 1.236 4.745-1.072-2.086-3.066-1.568-4.088-1.043a6.803 6.803 0 0 1-.281.158l-.02.012-.002.002c-2.115 1.123-4.957 1.205-7.812-.022a12.568 12.568 0 0 1-5.64-4.838c.649.48 1.35.902 2.097 1.252 3.019 1.414 6.051 1.311 8.197-.002C9.651 12.73 7.101 9.67 5.146 7.191a10.628 10.628 0 0 1-1.005-1.384c2.34 2.142 6.038 4.83 7.365 5.576C8.69 8.408 6.208 4.743 6.324 4.86c4.436 4.47 8.528 6.996 8.528 6.996.154.085.27.154.36.213.085-.215.16-.437.224-.668.707-2.588-.09-5.548-1.893-7.992z"/></svg>
<div class="t" style="left:1078.70px;top:149.03px;font-size:23px;line-height:23px;color:#dedede;">PlayerListView</div>
<svg class="a" style="left:1238px;top:146px;" width="12" height="29" viewBox="0 0 12 29"><path d="M1.5 1.5 L10 14.5 L1.5 27.5" fill="none" stroke="#9a9a9a" stroke-width="1.8" stroke-linecap="round" stroke-linejoin="round"/></svg>
<svg class="a" style="left:1258px;top:146px;" width="28" height="28" viewBox="0 0 28 28"><rect x="0" y="0" width="28" height="28" rx="5.5" fill="#5ec4d4"/><path d="M10.3 21 V7.3 H15 Q19.3 7.3 19.3 11.4 Q19.3 15.5 15 15.5 H10.3" fill="none" stroke="#ffffff" stroke-width="2.6" stroke-linejoin="round"/></svg>
<div class="t" style="left:1296.50px;top:149.03px;font-size:23px;line-height:23px;color:#dedede;letter-spacing:0.3px;">body</div>
<div class="a" style="left:486px;top:190px;width:1636px;height:1642px;background:#292a30;"></div>
<div class="a" style="left:486px;top:550px;width:1636px;height:36px;background:#303136;"></div>
<div class="a" style="left:572px;top:190px;width:14px;height:180px;background:#3a3b40;border-radius:0 0 7px 7px;"></div>
<div class="a" style="left:572px;top:478px;width:14px;height:1354px;background:#3a3b40;border-radius:7px 7px 0 0;"></div>
<div class="a" style="left:572px;top:514px;width:14px;height:1296px;background:transparent;border-radius:7px 7px 7px 7px;box-shadow:0 1.5px 0 rgba(0,0,0,0.3);"></div>
<div class="a" style="left:572px;top:514px;width:14px;height:1296px;background:#4c4d52;border-radius:7px 7px 7px 7px;box-shadow:0 -1.5px 0 rgba(0,0,0,0.3);"></div>
<div class="a" style="left:572px;top:550px;width:14px;height:1188px;background:transparent;border-radius:7px 7px 7px 7px;box-shadow:0 1.5px 0 rgba(0,0,0,0.3);"></div>
<div class="a" style="left:572px;top:550px;width:14px;height:1188px;background:#5f6065;border-radius:7px 7px 7px 7px;box-shadow:0 -1.5px 0 rgba(0,0,0,0.3);"></div>
<div class="a" style="left:572px;top:622px;width:14px;height:180px;background:transparent;border-radius:7px 7px 7px 7px;box-shadow:0 1.5px 0 rgba(0,0,0,0.3);"></div>
<div class="a" style="left:572px;top:622px;width:14px;height:180px;background:#7a7a7e;border-radius:7px 7px 7px 7px;box-shadow:0 -1.5px 0 rgba(0,0,0,0.3);"></div>
<div class="a" style="left:572px;top:712px;width:14px;height:2px;background:#5f6065;"></div>
<div class="a" style="left:572px;top:838px;width:14px;height:180px;background:transparent;border-radius:7px 7px 7px 7px;box-shadow:0 1.5px 0 rgba(0,0,0,0.3);"></div>
<div class="a" style="left:572px;top:838px;width:14px;height:180px;background:#7a7a7e;border-radius:7px 7px 7px 7px;box-shadow:0 -1.5px 0 rgba(0,0,0,0.3);"></div>
<div class="a" style="left:572px;top:928px;width:14px;height:2px;background:#5f6065;"></div>
<div class="a" style="left:572px;top:1054px;width:14px;height:180px;background:transparent;border-radius:7px 7px 7px 7px;box-shadow:0 1.5px 0 rgba(0,0,0,0.3);"></div>
<div class="a" style="left:572px;top:1054px;width:14px;height:180px;background:#7a7a7e;border-radius:7px 7px 7px 7px;box-shadow:0 -1.5px 0 rgba(0,0,0,0.3);"></div>
<div class="a" style="left:572px;top:1144px;width:14px;height:2px;background:#5f6065;"></div>
<div class="a" style="left:572px;top:1270px;width:14px;height:180px;background:transparent;border-radius:7px 7px 7px 7px;box-shadow:0 1.5px 0 rgba(0,0,0,0.3);"></div>
<div class="a" style="left:572px;top:1270px;width:14px;height:180px;background:#7a7a7e;border-radius:7px 7px 7px 7px;box-shadow:0 -1.5px 0 rgba(0,0,0,0.3);"></div>
<div class="a" style="left:572px;top:1360px;width:14px;height:2px;background:#5f6065;"></div>
<div class="a" style="left:572px;top:1486px;width:14px;height:180px;background:transparent;border-radius:7px 7px 7px 7px;box-shadow:0 1.5px 0 rgba(0,0,0,0.3);"></div>
<div class="a" style="left:572px;top:1486px;width:14px;height:180px;background:#7a7a7e;border-radius:7px 7px 7px 7px;box-shadow:0 -1.5px 0 rgba(0,0,0,0.3);"></div>
<div class="a" style="left:572px;top:1576px;width:14px;height:2px;background:#5f6065;"></div>
<div class="a" style="left:486px;top:190px;width:1636px;height:1642px;overflow:hidden">
<div class="ln" style="top:7.68px;color:#747478">2</div>
<div class="cl" style="top:5.92px"><span style="color:#7f8c98;">//  PlayerListView.swift</span></div>
<div class="ln" style="top:43.68px;color:#747478">3</div>
<div class="cl" style="top:41.92px"><span style="color:#7f8c98;">//  TradingCards</span></div>
<div class="ln" style="top:79.68px;color:#747478">4</div>
<div class="cl" style="top:77.92px"><span style="color:#7f8c98;">//</span></div>
<div class="ln" style="top:115.68px;color:#747478">5</div>
<div class="cl" style="top:113.92px"><span style="color:#7f8c98;">//  Created by Russell Gordon on 2023-01-16.</span></div>
<div class="ln" style="top:151.68px;color:#747478">6</div>
<div class="cl" style="top:149.92px"><span style="color:#7f8c98;">//</span></div>
<div class="ln" style="top:187.68px;color:#747478">7</div>
<div class="cl" style="top:185.92px"></div>
<div class="ln" style="top:223.68px;color:#747478">8</div>
<div class="cl" style="top:221.92px"><span style="color:#f28cbe;font-weight:700;">import</span><span style="color:#e2e2e3;"> SwiftUI</span></div>
<div class="ln" style="top:259.68px;color:#747478">9</div>
<div class="cl" style="top:257.92px"></div>
<div class="ln" style="top:295.68px;color:#747478">10</div>
<div class="cl" style="top:293.92px"><span style="color:#f28cbe;font-weight:700;">struct</span><span style="color:#e2e2e3;"> </span><span style="color:#7fd7f4;">PlayerListView</span><span style="color:#e2e2e3;">: </span><span style="color:#d7b7f8;">View</span><span style="color:#e2e2e3;"> {</span></div>
<div class="ln" style="top:331.68px;color:#747478">11</div>
<div class="cl" style="top:329.92px"><span style="color:#e2e2e3;">    </span><span style="color:#f28cbe;font-weight:700;">var</span><span style="color:#e2e2e3;"> </span><span style="color:#5ca9c2;">body</span><span style="color:#e2e2e3;">: </span><span style="color:#f28cbe;font-weight:700;">some</span><span style="color:#e2e2e3;"> </span><span style="color:#d7b7f8;">View</span><span style="color:#e2e2e3;"> {</span></div>
<div class="ln" style="top:367.68px;color:#ffffff">12</div>
<div class="cl" style="top:365.92px"><span style="color:#e2e2e3;">        </span><span style="color:#d7b7f8;">List</span><span style="color:#e2e2e3;"> {</span></div>
<div class="ln" style="top:403.68px;color:#747478">13</div>
<div class="cl" style="top:401.92px"></div>
<div class="ln" style="top:439.68px;color:#747478">14</div>
<div class="cl" style="top:437.92px"><span style="color:#e2e2e3;">            </span><span style="color:#d7b7f8;">NavigationLink</span><span style="color:#e2e2e3;">(</span><span style="color:#ab83e3;">destination</span><span style="color:#e2e2e3;">: {</span></div>
<div class="ln" style="top:475.68px;color:#747478">15</div>
<div class="cl" style="top:473.92px"><span style="color:#e2e2e3;">                </span><span style="color:#bdf1e2;">DetailView</span><span style="color:#e2e2e3;">(</span><span style="color:#80bfad;">player</span><span style="color:#e2e2e3;">: </span><span style="color:#80bfad;">kellyGruber</span><span style="color:#e2e2e3;">)</span></div>
<div class="ln" style="top:511.68px;color:#747478">16</div>
<div class="cl" style="top:509.92px"><span style="color:#e2e2e3;">            }, </span><span style="color:#ab83e3;">label</span><span style="color:#e2e2e3;">: {</span></div>
<div class="ln" style="top:547.68px;color:#747478">17</div>
<div class="cl" style="top:545.92px"><span style="color:#e2e2e3;">                </span><span style="color:#d7b7f8;">Text</span><span style="color:#e2e2e3;">(</span><span style="color:#80bfad;">kellyGruber</span><span style="color:#e2e2e3;">.</span><span style="color:#80bfad;">playerName</span><span style="color:#e2e2e3;">)</span></div>
<div class="ln" style="top:583.68px;color:#747478">18</div>
<div class="cl" style="top:581.92px"><span style="color:#e2e2e3;">            })</span></div>
<div class="ln" style="top:619.68px;color:#747478">19</div>
<div class="cl" style="top:617.92px"></div>
<div class="ln" style="top:655.68px;color:#747478">20</div>
<div class="cl" style="top:653.92px"><span style="color:#e2e2e3;">            </span><span style="color:#d7b7f8;">NavigationLink</span><span style="color:#e2e2e3;">(</span><span style="color:#ab83e3;">destination</span><span style="color:#e2e2e3;">: {</span></div>
<div class="ln" style="top:691.68px;color:#747478">21</div>
<div class="cl" style="top:689.92px"><span style="color:#e2e2e3;">                </span><span style="color:#bdf1e2;">DetailView</span><span style="color:#e2e2e3;">(</span><span style="color:#80bfad;">player</span><span style="color:#e2e2e3;">: </span><span style="color:#80bfad;">joeCarter</span><span style="color:#e2e2e3;">)</span></div>
<div class="ln" style="top:727.68px;color:#747478">22</div>
<div class="cl" style="top:725.92px"><span style="color:#e2e2e3;">            }, </span><span style="color:#ab83e3;">label</span><span style="color:#e2e2e3;">: {</span></div>
<div class="ln" style="top:763.68px;color:#747478">23</div>
<div class="cl" style="top:761.92px"><span style="color:#e2e2e3;">                </span><span style="color:#d7b7f8;">Text</span><span style="color:#e2e2e3;">(</span><span style="color:#80bfad;">joeCarter</span><span style="color:#e2e2e3;">.</span><span style="color:#80bfad;">playerName</span><span style="color:#e2e2e3;">)</span></div>
<div class="ln" style="top:799.68px;color:#747478">24</div>
<div class="cl" style="top:797.92px"><span style="color:#e2e2e3;">            })</span></div>
<div class="ln" style="top:835.68px;color:#747478">25</div>
<div class="cl" style="top:833.92px"></div>
<div class="ln" style="top:871.68px;color:#747478">26</div>
<div class="cl" style="top:869.92px"><span style="color:#e2e2e3;">            </span><span style="color:#d7b7f8;">NavigationLink</span><span style="color:#e2e2e3;">(</span><span style="color:#ab83e3;">destination</span><span style="color:#e2e2e3;">: {</span></div>
<div class="ln" style="top:907.68px;color:#747478">27</div>
<div class="cl" style="top:905.92px"><span style="color:#e2e2e3;">                </span><span style="color:#bdf1e2;">DetailView</span><span style="color:#e2e2e3;">(</span><span style="color:#80bfad;">player</span><span style="color:#e2e2e3;">: </span><span style="color:#80bfad;">patBorders</span><span style="color:#e2e2e3;">)</span></div>
<div class="ln" style="top:943.68px;color:#747478">28</div>
<div class="cl" style="top:941.92px"><span style="color:#e2e2e3;">            }, </span><span style="color:#ab83e3;">label</span><span style="color:#e2e2e3;">: {</span></div>
<div class="ln" style="top:979.68px;color:#747478">29</div>
<div class="cl" style="top:977.92px"><span style="color:#e2e2e3;">                </span><span style="color:#d7b7f8;">Text</span><span style="color:#e2e2e3;">(</span><span style="color:#80bfad;">patBorders</span><span style="color:#e2e2e3;">.</span><span style="color:#80bfad;">playerName</span><span style="color:#e2e2e3;">)</span></div>
<div class="ln" style="top:1015.68px;color:#747478">30</div>
<div class="cl" style="top:1013.92px"><span style="color:#e2e2e3;">            })</span></div>
<div class="ln" style="top:1051.68px;color:#747478">31</div>
<div class="cl" style="top:1049.92px"></div>
<div class="ln" style="top:1087.68px;color:#747478">32</div>
<div class="cl" style="top:1085.92px"><span style="color:#e2e2e3;">            </span><span style="color:#d7b7f8;">NavigationLink</span><span style="color:#e2e2e3;">(</span><span style="color:#ab83e3;">destination</span><span style="color:#e2e2e3;">: {</span></div>
<div class="ln" style="top:1123.68px;color:#747478">33</div>
<div class="cl" style="top:1121.92px"><span style="color:#e2e2e3;">                </span><span style="color:#bdf1e2;">DetailView</span><span style="color:#e2e2e3;">(</span><span style="color:#80bfad;">player</span><span style="color:#e2e2e3;">: </span><span style="color:#80bfad;">tonyFernandez</span><span style="color:#e2e2e3;">)</span></div>
<div class="ln" style="top:1159.68px;color:#747478">34</div>
<div class="cl" style="top:1157.92px"><span style="color:#e2e2e3;">            }, </span><span style="color:#ab83e3;">label</span><span style="color:#e2e2e3;">: {</span></div>
<div class="ln" style="top:1195.68px;color:#747478">35</div>
<div class="cl" style="top:1193.92px"><span style="color:#e2e2e3;">                </span><span style="color:#d7b7f8;">Text</span><span style="color:#e2e2e3;">(</span><span style="color:#80bfad;">tonyFernandez</span><span style="color:#e2e2e3;">.</span><span style="color:#80bfad;">playerName</span><span style="color:#e2e2e3;">)</span></div>
<div class="ln" style="top:1231.68px;color:#747478">36</div>
<div class="cl" style="top:1229.92px"><span style="color:#e2e2e3;">            })</span></div>
<div class="ln" style="top:1267.68px;color:#747478">37</div>
<div class="cl" style="top:1265.92px"></div>
<div class="ln" style="top:1303.68px;color:#747478">38</div>
<div class="cl" style="top:1301.92px"><span style="color:#e2e2e3;">            </span><span style="color:#d7b7f8;">NavigationLink</span><span style="color:#e2e2e3;">(</span><span style="color:#ab83e3;">destination</span><span style="color:#e2e2e3;">: {</span></div>
<div class="ln" style="top:1339.68px;color:#747478">39</div>
<div class="cl" style="top:1337.92px"><span style="color:#e2e2e3;">                </span><span style="color:#bdf1e2;">DetailView</span><span style="color:#e2e2e3;">(</span><span style="color:#80bfad;">player</span><span style="color:#e2e2e3;">: </span><span style="color:#80bfad;">joeCarter</span><span style="color:#e2e2e3;">)</span></div>
<div class="ln" style="top:1375.68px;color:#747478">40</div>
<div class="cl" style="top:1373.92px"><span style="color:#e2e2e3;">            }, </span><span style="color:#ab83e3;">label</span><span style="color:#e2e2e3;">: {</span></div>
<div class="ln" style="top:1411.68px;color:#747478">41</div>
<div class="cl" style="top:1409.92px"><span style="color:#e2e2e3;">                </span><span style="color:#d7b7f8;">Text</span><span style="color:#e2e2e3;">(</span><span style="color:#80bfad;">georgeBell</span><span style="color:#e2e2e3;">.</span><span style="color:#80bfad;">playerName</span><span style="color:#e2e2e3;">)</span></div>
<div class="ln" style="top:1447.68px;color:#747478">42</div>
<div class="cl" style="top:1445.92px"><span style="color:#e2e2e3;">            })</span></div>
<div class="ln" style="top:1483.68px;color:#747478">43</div>
<div class="cl" style="top:1481.92px"></div>
<div class="ln" style="top:1519.68px;color:#747478">44</div>
<div class="cl" style="top:1517.92px"><span style="color:#e2e2e3;">        }</span></div>
<div class="ln" style="top:1555.68px;color:#747478">45</div>
<div class="cl" style="top:1553.92px"><span style="color:#e2e2e3;">        .</span><span style="color:#ab83e3;">navigationTitle</span><span style="color:#e2e2e3;">(</span><span style="color:#ee8a75;">"Blue Jays of My Youth"</span><span style="color:#e2e2e3;">)</span></div>
<div class="ln" style="top:1591.68px;color:#747478">46</div>
<div class="cl" style="top:1589.92px"><span style="color:#e2e2e3;">    }</span></div>
<div class="ln" style="top:1627.68px;color:#747478">47</div>
<div class="cl" style="top:1625.92px"><span style="color:#e2e2e3;">}</span></div>
</div>
<div class="a" style="left:2122px;top:190px;width:2px;height:1642px;background:#000;"></div>
<div class="a" style="left:2124px;top:190px;width:900px;height:1642px;background:#575b63;"></div>
<div class="a" style="left:2148px;top:214px;width:63px;height:52px;background:#3b3b3c;border-radius:11px;box-shadow:0 0 0 1px #5a5b5e;"></div>
<svg class="a" style="left:2166px;top:224px;" width="26" height="34" viewBox="0 0 26 34"><g fill="none" stroke="#e6e6e6" stroke-width="2.1" stroke-linejoin="round" stroke-linecap="round"><path d="M5.5 2.5 H20.5 L17 9.5 Q16.5 11.5 18 13 L22 16 Q23.5 17.5 22 18.5 H4 Q2.5 17.5 4 16 L8 13 Q9.5 11.5 9 9.5 Z"/><line x1="13" y1="18.5" x2="13" y2="31"/></g></svg>
<div class="a" style="left:2232px;top:214px;width:232px;height:52px;background:#6b7fa7;border-radius:11px;box-shadow:0 0 0 1px #7486ab inset;"></div>
<svg class="a" style="left:2248px;top:226px;" width="26" height="28" viewBox="0 0 26 28"><g fill="none" stroke="#ffffff" stroke-width="2" stroke-linecap="round"><rect x="2" y="9.5" width="21.5" height="16" rx="3"/><line x1="4.5" y1="5.8" x2="21" y2="5.8"/><line x1="6.5" y1="2.8" x2="19" y2="2.8"/></g></svg>
<div class="t" style="left:2282.00px;top:228.93px;font-size:23px;line-height:23px;color:#ffffff;letter-spacing:0.1px;">Player List View</div>
<div class="a" style="left:2244px;top:606px;width:9px;height:47px;background:#2f2f31;border-radius:1px;box-shadow:0 -1px 0 #6a6a6a;"></div>
<div class="a" style="left:2244px;top:702px;width:9px;height:98px;background:#2f2f31;border-radius:1px;box-shadow:0 -1px 0 #6a6a6a;"></div>
<div class="a" style="left:2244px;top:830px;width:9px;height:98px;background:#2f2f31;border-radius:1px;box-shadow:0 -1px 0 #6a6a6a;"></div>
<div class="a" style="left:2896px;top:769px;width:8px;height:158px;background:#2f2f31;border-radius:1px;box-shadow:0 -1px 0 #6a6a6a;"></div>
<div class="a" style="left:2251px;top:344px;width:646px;height:1334px;background:#2c2c2e;border-radius:120px;box-shadow:0 0 0 1.5px #8a8a8c inset;"></div>
<div class="a" style="left:2260px;top:353px;width:628px;height:1316px;background:#000;border-radius:112px;"></div>
<div class="a" style="left:2280px;top:372px;width:589px;height:1278px;background:#f2f2f7;border-radius:92px;"></div>
<div class="a" style="left:2481px;top:389px;width:187px;height:54px;background:#000;border-radius:27px;"></div>
<div class="t" style="left:2303.50px;top:529.27px;font-size:52px;line-height:52px;color:#000000;font-weight:700;letter-spacing:-1.5px;">Blue Jays of My Youth</div>
<div class="a" style="left:2310px;top:597px;width:529px;height:329px;background:#ffffff;border-radius:15px;"></div>
<div class="t" style="left:2340.40px;top:618.41px;font-size:25.5px;line-height:25.5px;color:#000000;letter-spacing:-0.1px;">Kelly Gruber</div>
<svg class="a" style="left:2795px;top:619px;" width="16" height="22" viewBox="0 0 16 22"><path d="M3 2.5 L12 11 L3 19.5" fill="none" stroke="#c4c4c7" stroke-width="2.8" stroke-linecap="round" stroke-linejoin="round"/></svg>
<div class="a" style="left:2340px;top:662px;width:499px;height:1px;background:#d5d5d9;"></div>
<div class="t" style="left:2340.40px;top:684.41px;font-size:25.5px;line-height:25.5px;color:#000000;letter-spacing:-0.1px;">Joe Carter</div>
<svg class="a" style="left:2795px;top:685px;" width="16" height="22" viewBox="0 0 16 22"><path d="M3 2.5 L12 11 L3 19.5" fill="none" stroke="#c4c4c7" stroke-width="2.8" stroke-linecap="round" stroke-linejoin="round"/></svg>
<div class="a" style="left:2340px;top:728px;width:499px;height:1px;background:#d5d5d9;"></div>
<div class="t" style="left:2340.40px;top:750.41px;font-size:25.5px;line-height:25.5px;color:#000000;letter-spacing:-0.1px;">Pat Borders</div>
<svg class="a" style="left:2795px;top:751px;" width="16" height="22" viewBox="0 0 16 22"><path d="M3 2.5 L12 11 L3 19.5" fill="none" stroke="#c4c4c7" stroke-width="2.8" stroke-linecap="round" stroke-linejoin="round"/></svg>
<div class="a" style="left:2340px;top:794px;width:499px;height:1px;background:#d5d5d9;"></div>
<div class="t" style="left:2340.40px;top:816.41px;font-size:25.5px;line-height:25.5px;color:#000000;letter-spacing:-0.1px;">Tony Fernandez</div>
<svg class="a" style="left:2795px;top:817px;" width="16" height="22" viewBox="0 0 16 22"><path d="M3 2.5 L12 11 L3 19.5" fill="none" stroke="#c4c4c7" stroke-width="2.8" stroke-linecap="round" stroke-linejoin="round"/></svg>
<div class="a" style="left:2340px;top:860px;width:499px;height:1px;background:#d5d5d9;"></div>
<div class="t" style="left:2340.40px;top:882.41px;font-size:25.5px;line-height:25.5px;color:#000000;letter-spacing:-0.1px;">George Bell</div>
<svg class="a" style="left:2795px;top:883px;" width="16" height="22" viewBox="0 0 16 22"><path d="M3 2.5 L12 11 L3 19.5" fill="none" stroke="#c4c4c7" stroke-width="2.8" stroke-linecap="round" stroke-linejoin="round"/></svg>
<div class="a" style="left:2149px;top:1757px;width:159px;height:51px;background:#3b3b3c;border-radius:13px;box-shadow:0 0 0 1px #626366;"></div>
<div class="a" style="left:2328px;top:1757px;width:65px;height:51px;background:#3b3b3c;border-radius:13px;box-shadow:0 0 0 1px #626366;"></div>
<div class="a" style="left:2413px;top:1757px;width:62px;height:51px;background:#3b3b3c;border-radius:13px;box-shadow:0 0 0 1px #626366;"></div>
<div class="a" style="left:2793px;top:1757px;width:206px;height:51px;background:#3b3b3c;border-radius:13px;box-shadow:0 0 0 1px #626366;"></div>
<svg class="a" style="left:2165px;top:1769px;" width="28" height="28" viewBox="0 0 28 28"><circle cx="14" cy="14" r="13.3" fill="#2f7cf6"/><path d="M10.5 8.5 L19.5 14 L10.5 19.5Z" fill="#343434"/></svg>
<svg class="a" style="left:2213px;top:1769px;" width="26" height="26" viewBox="0 0 26 26"><rect x="2" y="2" width="22" height="22.5" rx="3" fill="none" stroke="#dadada" stroke-width="2.3"/><path d="M9.5 6.5 L9.5 18 L12.2 15.6 L14.3 19.8 L16.2 18.9 L14.2 14.8 L17.8 14.6 Z" fill="#dadada"/></svg>
<svg class="a" style="left:2259px;top:1770px;" width="30" height="26" viewBox="0 0 30 26"><rect x="1" y="1" width="7.5" height="10.5" rx="2.2" fill="none" stroke="#dadada" stroke-width="2"/><rect x="11" y="1" width="7.5" height="10.5" rx="2.2" fill="none" stroke="#dadada" stroke-width="2"/><rect x="21" y="1" width="7.5" height="10.5" rx="2.2" fill="none" stroke="#dadada" stroke-width="2"/><rect x="1" y="14" width="7.5" height="10.5" rx="2.2" fill="none" stroke="#dadada" stroke-width="2"/><rect x="11" y="14" width="7.5" height="10.5" rx="2.2" fill="none" stroke="#dadada" stroke-width="2"/><rect x="21" y="14" width="7.5" height="10.5" rx="2.2" fill="none" stroke="#dadada" stroke-width="2"/></svg>
<svg class="a" style="left:2345px;top:1770px;" width="30" height="27" viewBox="0 0 30 27"><rect x="1" y="1" width="27" height="11" rx="5.5" fill="none" stroke="#dadada" stroke-width="2"/><circle cx="6.5" cy="6.5" r="3.5" fill="#dadada"/><rect x="1" y="14.5" width="27" height="11" rx="5.5" fill="#dadada"/><circle cx="22.5" cy="20" r="3.5" fill="#3b3b3d"/></svg>
<svg class="a" style="left:2430px;top:1769px;" width="28" height="28" viewBox="0 0 28 28"><circle cx="14" cy="14" r="12.5" fill="none" stroke="#b0b0b0" stroke-width="2"/><rect x="9.5" y="6.5" width="9" height="15" rx="2" fill="none" stroke="#b0b0b0" stroke-width="1.8"/></svg>
<svg class="a" style="left:2808px;top:1769px;" width="30" height="30" viewBox="0 0 30 30"><circle cx="12.5" cy="11.5" r="9.2" fill="none" stroke="#dadada" stroke-width="2.8"/><line x1="19" y1="18" x2="25.5" y2="24.5" stroke="#dadada" stroke-width="3.2" stroke-linecap="round"/><line x1="8.5" y1="11.5" x2="16.5" y2="11.5" stroke="#dadada" stroke-width="2.2"/></svg>
<svg class="a" style="left:2856px;top:1769px;" width="30" height="30" viewBox="0 0 30 30"><circle cx="12.5" cy="11.5" r="9.2" fill="none" stroke="#dadada" stroke-width="2.8"/><line x1="19" y1="18" x2="25.5" y2="24.5" stroke="#dadada" stroke-width="3.2" stroke-linecap="round"/><path d="M10.5 8 L13 6.5 V16" fill="none" stroke="#dadada" stroke-width="2.2" stroke-linejoin="round"/></svg>
<svg class="a" style="left:2904px;top:1769px;" width="30" height="30" viewBox="0 0 30 30"><circle cx="12.5" cy="11.5" r="9.2" fill="none" stroke="#dadada" stroke-width="2.8"/><line x1="19" y1="18" x2="25.5" y2="24.5" stroke="#dadada" stroke-width="3.2" stroke-linecap="round"/><rect x="9" y="8" width="7" height="7" rx="1" fill="none" stroke="#dadada" stroke-width="2.2"/></svg>
<svg class="a" style="left:2952px;top:1769px;" width="30" height="30" viewBox="0 0 30 30"><circle cx="12.5" cy="11.5" r="9.2" fill="none" stroke="#dadada" stroke-width="2.8"/><line x1="19" y1="18" x2="25.5" y2="24.5" stroke="#dadada" stroke-width="3.2" stroke-linecap="round"/><line x1="8.5" y1="11.5" x2="16.5" y2="11.5" stroke="#dadada" stroke-width="2.2"/><line x1="12.5" y1="7.5" x2="12.5" y2="15.5" stroke="#dadada" stroke-width="2.2"/></svg>
<div class="a" style="left:486px;top:1832px;width:2538px;height:2px;background:#000;"></div>
<div class="a" style="left:486px;top:1834px;width:2538px;height:54px;background:#262626;"></div>
<svg class="a" style="left:508px;top:1851px;" width="32" height="20" viewBox="0 0 32 20"><path d="M3 0.5 H22 Q24 0.5 25.3 2 L30 8.5 Q31 10 30 11.5 L25.3 18 Q24 19.5 22 19.5 H3 Q0.5 19.5 0.5 17 V3 Q0.5 0.5 3 0.5Z" fill="#3b82f4"/></svg>
<div class="t" style="left:2761.00px;top:1850.87px;font-size:22px;line-height:22px;color:#a6a6a6;font-weight:700;letter-spacing:0.45px;-webkit-text-stroke-width:0.15px;">Line: 12  Col: 13</div>
<div class="a" style="left:2954px;top:1850px;width:2px;height:24px;background:#3d3d3d;"></div>
<svg class="a" style="left:2973px;top:1848px;" width="26" height="26" viewBox="0 0 28 28"><rect x="1.2" y="1.2" width="25.6" height="25.6" rx="4" fill="none" stroke="#ababab" stroke-width="2.4"/><rect x="4.5" y="17" width="19" height="6" rx="1.5" fill="#ababab"/></svg>
<div id="edge"></div>
</div>
</body></html>
